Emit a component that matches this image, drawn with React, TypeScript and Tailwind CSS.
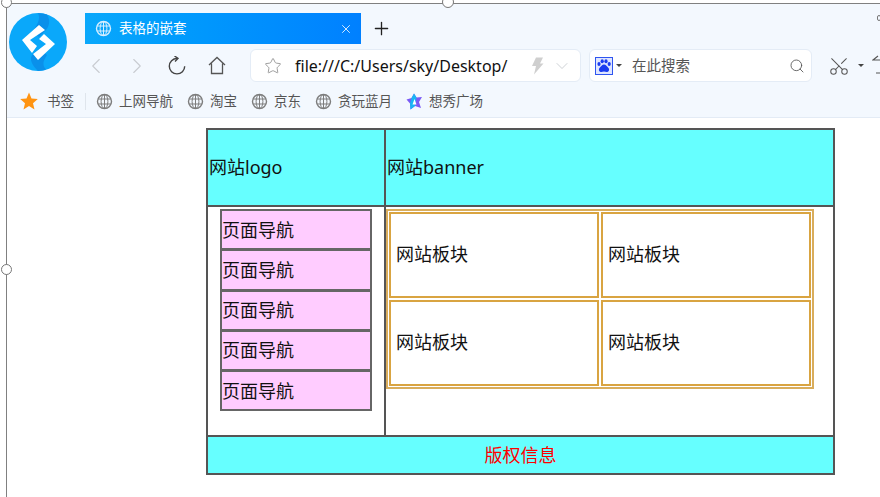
import React from "react";
import { ChevronLeft, ChevronRight, ChevronDown, Star, Search, X, Plus, Scissors } from "lucide-react";

function Globe({ size = 17, color = "#7d7d7d" }: { size?: number; color?: string }) {
  return (
    <svg width={size} height={size} viewBox="0 0 17 17" fill="none" stroke={color} strokeWidth="1" className="shrink-0">
      <circle cx="8.5" cy="8.5" r="7" strokeWidth="1.4" />
      <ellipse cx="8.5" cy="8.5" rx="3.4" ry="7" />
      <path d="M8.5 1.5v14M2 6h13M2 11h13" />
    </svg>
  );
}

function Logo() {
  return (
    <svg width="58" height="58" viewBox="0 0 58 58" className="shrink-0">
      <circle cx="29" cy="29" r="29" fill="#0aa8fa" />
      <path d="M29 0A29 29 0 0 1 38 1.5C42 8 40 14 36 18L30 24L24 18C28 12 32 6 29 0Z" fill="#0a90ea" />
      <path d="M37 56.5A29 29 0 0 1 29 58C24 53 19 46 24 41L30 36L38 42C34 48 33 52 37 56.5Z" fill="#0a90ea" />
      <path d="M30 12L36 17L21 27L28 33L23 40L13 27Z" fill="#fff" />
      <path d="M35 21L46 31L29 47L24 41L37 31L30 26Z" fill="#fff" />
    </svg>
  );
}

function Baidu() {
  return (
    <svg width="18" height="18" viewBox="0 0 18 18" className="shrink-0">
      <rect x="0.5" y="0.5" width="17" height="17" fill="#dfe6ff" stroke="#2f55f0" />
      <g fill="#1a3cf0">
        <ellipse cx="4" cy="7" rx="1.6" ry="2" />
        <ellipse cx="7.2" cy="4.2" rx="1.6" ry="2" />
        <ellipse cx="11" cy="4.2" rx="1.6" ry="2" />
        <ellipse cx="14.2" cy="7" rx="1.6" ry="2" />
        <path d="M9 7.5c2 0 3 2 4.5 3.5 1.2 1.5.5 4-1.8 4-1 0-1.7-.4-2.7-.4s-1.700.4-2.700.4c-2.300 0-3-2.500-1.800-4C6 9.500 7 7.500 9 7.500Z" />
      </g>
    </svg>
  );
}

function Bookmark({ label, icon }: { label: string; icon?: React.ReactNode }) {
  return (
    <div className="flex items-center gap-[6px] text-[13.5px] text-[#555]">
      {icon ?? <Globe size={17} />}
      <span>{label}</span>
    </div>
  );
}

function NavCell() {
  return (
    <div className="h-[41.25px] bg-[#ffccff] border-2 border-[#666] -mt-[1px] first:mt-0 flex items-center text-[18px] text-[#111] leading-none">
      页面导航
    </div>
  );
}

function BlockCell() {
  return (
    <div className="border-2 border-[#d9a441] flex items-center pl-[5px] pb-[2px] text-[18px] text-[#111]">
      网站板块
    </div>
  );
}

export default function App() {
  return (
    <div className="relative w-[880px] h-[497px] overflow-hidden bg-white font-['Noto_Sans','Noto_Sans_CJK_SC',sans-serif]">
      <div className="ml-[6px] mt-[3px] border-l border-t border-[#808080] h-[494px]">
        <div className="bg-[#f3f8fe] h-[114px] border-b border-[#e3ebf5] flex flex-col">
          <div className="flex flex-1 min-h-0">
            <div className="ml-[2px] mt-[9px]">
              <Logo />
            </div>
            <div className="ml-[18px] mt-[9px] flex-1 min-w-0">
              <div className="flex items-center h-[31px]">
                <div className="w-[276px] h-[31px] bg-linear-to-r from-[#0aa8fb] to-[#0080ff] flex items-center pl-[10px] pr-[8px] text-white text-[13.5px]">
                  <Globe size={17} color="#d7eeff" />
                  <span className="ml-[7px] flex-1">表格的嵌套</span>
                  <X size={14} strokeWidth={1.4} />
                </div>
                <Plus size={21} strokeWidth={1.5} className="ml-[10px] text-[#222]" />
              </div>
              <div className="flex items-center mt-[5px] h-[33px]">
                <ChevronLeft size={26} strokeWidth={1} className="-ml-[2px] text-[#c8ccd1] shrink-0" />
                <ChevronRight size={26} strokeWidth={1} className="ml-[15px] text-[#c8ccd1] shrink-0" />
                <svg width="20" height="20" viewBox="0 0 20 20" fill="none" stroke="#444" strokeWidth="1.4" className="ml-[17px] shrink-0">
                  <path d="M10 2.500A7.700 7.700 0 1 0 17.700 10.200" />
                  <path d="M7.500 0L11 2.400L8 5.500" />
                </svg>
                <svg width="18" height="19" viewBox="0 0 18 19" fill="none" stroke="#555" strokeWidth="1.3" className="ml-[21px] shrink-0">
                  <path d="M1 9L9 1.500L17 9M3.500 7.500V17.500H14.500V7.500" />
                </svg>
                <div className="ml-[24px] w-[331px] h-[33px] bg-white border border-[#e4ecf6] rounded-[6px] flex items-center pl-[13px] pr-[8px] shrink-0">
                  <Star size={18} strokeWidth={1.1} className="text-[#8a8a8a] shrink-0" />
                  <span className="ml-[13px] text-[16px] text-[#111] flex-1 whitespace-nowrap">file:///C:/Users/sky/Desktop/</span>
                  <svg width="13" height="18" viewBox="0 0 13 18" className="shrink-0">
                    <path d="M5 0.500H12L9 6.500H12.500L3 17.500L5 9H1Z" fill="#cfcfcf" />
                  </svg>
                  <ChevronDown size={20} strokeWidth={1} className="ml-[8px] text-[#c4c8cc] shrink-0" />
                </div>
                <div className="ml-[8px] w-[223px] h-[33px] bg-white border border-[#e4ecf6] rounded-[6px] flex items-center pl-[5px] pr-[6px] shrink-0">
                  <Baidu />
                  <div className="ml-[3px] w-0 h-0 border-x-[3px] border-x-transparent border-t-[3px] border-t-[#444]" />
                  <span className="ml-[10px] text-[14.5px] text-[#555] flex-1">在此搜索</span>
                  <Search size={16} strokeWidth={1.3} className="text-[#555] shrink-0" />
                </div>
                <Scissors size={22} strokeWidth={1.1} className="ml-[16px] text-[#555] shrink-0 -rotate-90" />
                <div className="ml-[8px] w-0 h-0 shrink-0 border-x-[3px] border-x-transparent border-t-[3px] border-t-[#444]" />
                <svg width="14" height="22" viewBox="0 0 14 22" fill="none" stroke="#555" strokeWidth="1.2" className="ml-[8px] shrink-0">
                  <path d="M6 1L1 5H12M4 18H12" />
                </svg>
              </div>
            </div>
          </div>
          <div className="flex items-center h-[26px] mb-[3px] pl-[13px]">
            <svg width="18" height="18" viewBox="0 0 18 18" className="shrink-0">
              <path d="M9 0.500L11.500 6.500L17.800 7L13 11.200L14.500 17.500L9 14.100L3.500 17.500L5 11.200L0.200 7L6.500 6.500Z" fill="#ff9412" />
            </svg>
            <span className="ml-[9px] text-[13.5px] text-[#555]">书签</span>
            <div className="ml-[11px] mr-[10px] w-px h-[17px] bg-[#dfe5ec]" />
            <div className="flex items-center gap-[14px]">
              <Bookmark label="上网导航" />
              <Bookmark label="淘宝" />
              <Bookmark label="京东" />
              <Bookmark label="贪玩蓝月" />
              <Bookmark
                label="想秀广场"
                icon={
                  <svg width="17" height="17" viewBox="0 0 17 17" className="shrink-0">
                    <path d="M8 .5L10.500 4.500L16 4L13 9L15 15L9 13L4.500 16.500L4 10.500L.5 6.500L5.500 5Z" fill="#7a5af5" />
                    <path d="M8 .5L10.500 4.500L9 13L4.500 16.500L4 10.500L5.500 5Z" fill="#19b5f5" />
                    <path d="M8.500 6L10.500 11.500H6.500Z" fill="#fff" />
                  </svg>
                }
              />
            </div>
          </div>
        </div>

        <div className="ml-[199px] mt-[10px] w-[629px] h-[347px] border-2 border-[#555] flex flex-col bg-white">
          <div className="flex h-[77px] shrink-0 bg-[#66ffff] text-[18px] text-[#111] border-b-2 border-[#555]">
            <div className="w-[178px] border-r-2 border-[#555] flex items-center pl-[1px]">网站logo</div>
            <div className="flex-1 flex items-center pl-[1px]">网站banner</div>
          </div>
          <div className="flex h-[230px] shrink-0 border-b-2 border-[#555]">
            <div className="w-[178px] border-r-2 border-[#555] pl-[12px] pt-[2px]">
              <div className="w-[152px] flex flex-col">
                <NavCell />
                <NavCell />
                <NavCell />
                <NavCell />
                <NavCell />
              </div>
            </div>
            <div className="flex-1 pt-[2px]">
              <div className="w-[428px] h-[180px] border-2 border-[#d9ad5c] grid grid-cols-2 grid-rows-2 gap-[2px] p-[1px]">
                <BlockCell />
                <BlockCell />
                <BlockCell />
                <BlockCell />
              </div>
            </div>
          </div>
          <div className="flex-1 bg-[#66ffff] flex items-center justify-center text-[18px] text-[#ff0000]">版权信息</div>
        </div>
      </div>

      <div className="absolute left-[1px] top-[-3px] w-[11px] h-[11px] rounded-full bg-white border border-[#777]" />
      <div className="absolute left-[442px] top-[-4px] w-[12px] h-[12px] rounded-full bg-white border border-[#777]" />
      <div className="absolute left-[1px] top-[264px] w-[11px] h-[11px] rounded-full bg-white border border-[#777]" />
      <div className="absolute left-[877px] top-[15px] w-[4px] h-[6px] rounded-full border border-[#777]" />
    </div>
  );
}
